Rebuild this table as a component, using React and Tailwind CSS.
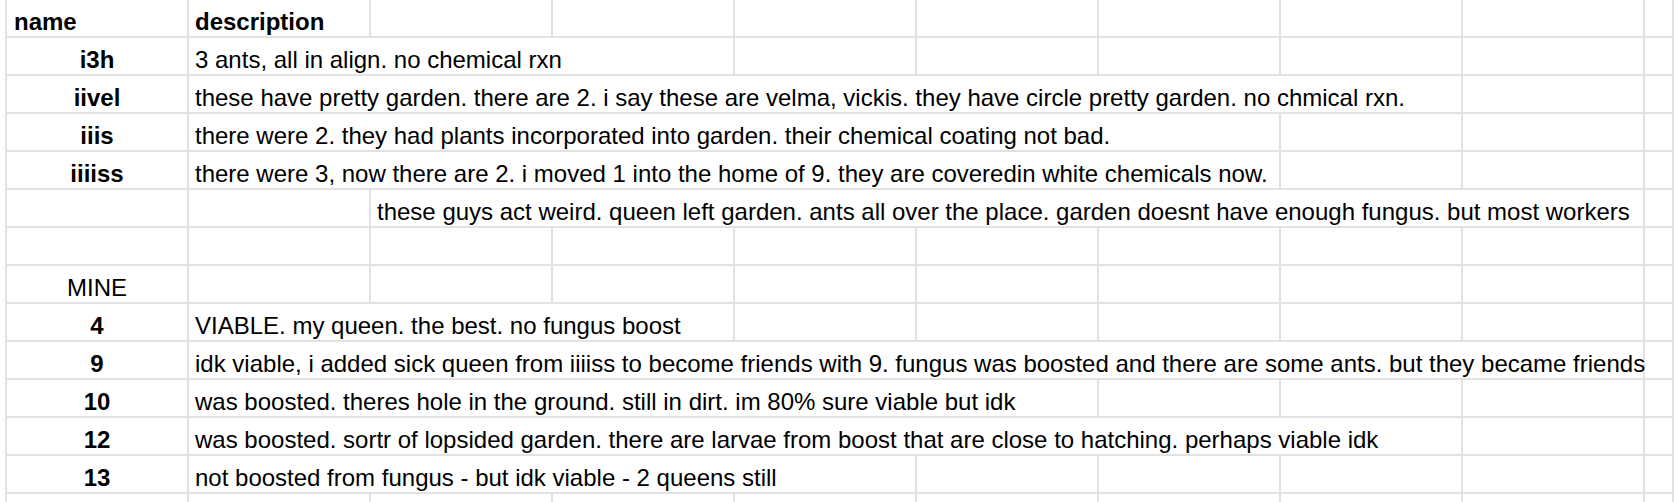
import React from 'react'

// spreadsheet-ish grid: 9 full columns of 182px + a partial one
const spanClass = {
  1: 'col-span-1',
  2: 'col-span-2',
  3: 'col-span-3',
  4: 'col-span-4',
  5: 'col-span-5',
  6: 'col-span-6',
  7: 'col-span-7',
  8: 'col-span-8',
}

const rows = [
  { name: 'i3h', text: '3 ants, all in align. no chemical rxn', span: 3 },
  { name: 'iivel', text: 'these have pretty garden. there are 2. i say these are velma, vickis. they have circle pretty garden. no chmical rxn.', span: 7 },
  { name: 'iiis', text: 'there were 2. they had plants incorporated into garden. their chemical coating not bad.', span: 6 },
  { name: 'iiiiss', text: 'there were 3, now there are 2. i moved 1 into the home of 9. they are coveredin white chemicals now.', span: 6 },
  { name: '', offset: 1, text: 'these guys act weird. queen left garden. ants all over the place. garden doesnt have enough fungus. but most workers', span: 7 },
  { name: '' },
  { name: 'MINE', plain: true },
  { name: '4', text: 'VIABLE. my queen. the best. no fungus boost', span: 3 },
  { name: '9', text: 'idk viable, i added sick queen from iiiiss to become friends with 9. fungus was boosted and there are some ants. but they became friends', span: 8 },
  { name: '10', text: 'was boosted. theres hole in the ground. still in dirt. im 80% sure viable but idk', span: 5 },
  { name: '12', text: 'was boosted. sortr of lopsided garden. there are larvae from boost that are close to hatching. perhaps viable idk', span: 7 },
  { name: '13', text: 'not boosted from fungus - but idk viable - 2 queens still', span: 4 },
  { name: '' },
]

const cell = 'h-[38px] border-r-2 border-b-2 border-[#e2e2e2] flex items-end pb-[2px] px-[6px] whitespace-nowrap leading-none'

function Blank({ n }) {
  return Array.from({ length: n }, (_, i) => <div key={i} className={cell} />)
}

function Row({ row }) {
  const offset = row.offset ?? 0
  const span = row.text ? row.span : 0
  const rest = 9 - 1 - offset - span
  return (
    <>
      <div className={`${cell} justify-center ${row.plain ? '' : 'font-bold'}`}>{row.name}</div>
      <Blank n={offset} />
      {row.text && <div className={`${cell} ${spanClass[span]}`}>{row.text}</div>}
      <Blank n={rest} />
      <div className={cell} />
    </>
  )
}

export default function App() {
  return (
    <div className="w-[1674px] h-[502px] overflow-hidden bg-white pl-[5px] text-[24px] text-black font-['Liberation_Sans',Arial,sans-serif]">
      <div className="grid grid-cols-[repeat(9,182px)_1fr] border-l-2 border-[#e2e2e2]">
        <div className={`${cell} font-bold pl-[7px]`}>name</div>
        <div className={`${cell} font-bold`}>description</div>
        <Blank n={8} />
        {rows.map((r, i) => (
          <Row key={i} row={r} />
        ))}
      </div>
    </div>
  )
}
